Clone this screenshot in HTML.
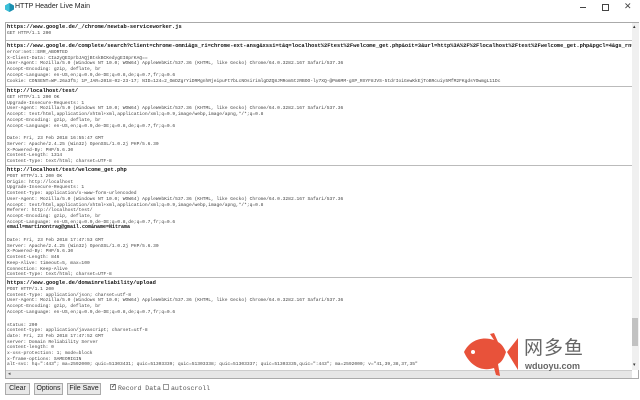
<!DOCTYPE html>
<html><head><meta charset="utf-8"><style>
*{margin:0;padding:0;box-sizing:border-box}
body{width:640px;height:400px;background:#fff;position:relative;overflow:hidden;font-family:"Liberation Sans",sans-serif}
.title{position:absolute;left:15px;top:3px;font-size:7px;color:#222}
.box{position:absolute;left:5px;top:22px;width:634px;height:357px;border:1px solid #aaa;background:#fff}
.clip{position:absolute;left:6px;top:23px;width:626px;height:347px;overflow:hidden}
.e{position:absolute;left:1px;font-family:"Liberation Mono",monospace;color:#444;white-space:nowrap;font-size:4.6px;line-height:5.7px}
.u{font-size:5.4px;line-height:7px;color:#111;font-weight:bold}
.b{font-weight:bold;color:#111;font-size:5px}
.g{height:7px}
.d{position:absolute;left:0;width:626px;height:1px;background:#bbb}
.btn{position:absolute;top:383px;height:12px;border:1px solid #aaa;background:#e8e8e8;font-size:7px;line-height:10px;text-align:center;color:#222}
.cb{position:absolute;top:385px;font-family:"Liberation Mono",monospace;font-size:6.5px;color:#555}
</style></head><body>
<svg style="position:absolute;left:5px;top:3px" width="9" height="9" viewBox="0 0 9 9"><path d="M4.5 0L9 2.5V6.5L4.5 9L0 6.5V2.5Z" fill="#1a8fb0"/><path d="M4.5 0V9L0 6.5V2.5Z" fill="#3cc0d8"/></svg>
<div class="title">HTTP Header Live Main</div>
<div style="position:absolute;left:580px;top:7px;width:6px;height:1px;background:#444"></div>
<div style="position:absolute;left:602px;top:4px;width:7px;height:7px;border:1px solid #444"></div>
<div style="position:absolute;left:624px;top:1px;font-size:9px;color:#444">✕</div>
<div class="box"></div>
<div class="clip">
<div class="d" style="top:17px"></div>
<div class="d" style="top:63px"></div>
<div class="d" style="top:142px"></div>
<div class="d" style="top:254px"></div>
<div class="e" style="top:1px"><div class="u">https://www.google.de/_/chrome/newtab-serviceworker.js</div><div>GET HTTP/1.1 200</div></div>
<div class="e" style="top:20px"><div class="u">https://www.google.de/complete/search?client=chrome-omni&amp;gs_ri=chrome-ext-ansg&amp;xssi=t&amp;q=localhost%2Ftest%2Fwelcome_get.php&amp;oit=3&amp;url=http%3A%2F%2Flocalhost%2Ftest%2Fwelcome_get.php&amp;pgcl=4&amp;gs_rn=</div>
<div>error:net::ERR_ABORTED</div><div>X-Client-Data: CIa2yQEIprbJAQjBtskBCKedygEI8prKAQ==</div><div>User-Agent: Mozilla/5.0 (Windows NT 10.0; WOW64) AppleWebKit/537.36 (KHTML, like Gecko) Chrome/64.0.3282.167 Safari/537.36</div><div>Accept-Encoding: gzip, deflate, br</div><div>Accept-Language: en-US,en;q=0.9,de-DE;q=0.8,de;q=0.7,fr;q=0.6</div><div>Cookie: CONSENT=WP.26a3f5; 1P_JAR=2018-02-23-17; NID=124=2_OmDZgrYiDRMgnhRjeipuFt7bLcNOsirimlgDZQ8JMRom5tzRBOO-ly7XQ-@Pm6MM-gXP_RXYF8JVS-5tdrIoiGewKkEjToBRcuiy5MfM2FKgdsYOwmgL11Dc</div></div>
<div class="e" style="top:65px"><div class="u">http://localhost/test/</div>
<div>GET HTTP/1.1 200 OK</div><div>Upgrade-Insecure-Requests: 1</div><div>User-Agent: Mozilla/5.0 (Windows NT 10.0; WOW64) AppleWebKit/537.36 (KHTML, like Gecko) Chrome/64.0.3282.167 Safari/537.36</div><div>Accept: text/html,application/xhtml+xml,application/xml;q=0.9,image/webp,image/apng,*/*;q=0.8</div><div>Accept-Encoding: gzip, deflate, br</div><div>Accept-Language: en-US,en;q=0.9,de-DE;q=0.8,de;q=0.7,fr;q=0.6</div><div class="g"></div>
<div>Date: Fri, 23 Feb 2018 16:55:47 GMT</div><div>Server: Apache/2.4.25 (Win32) OpenSSL/1.0.2j PHP/5.6.30</div><div>X-Powered-By: PHP/5.6.30</div><div>Content-Length: 1314</div><div>Content-Type: text/html; charset=UTF-8</div></div>
<div class="e" style="top:144px"><div class="u">http://localhost/test/welcome_get.php</div>
<div>POST HTTP/1.1 200 OK</div><div>Origin: http://localhost</div><div>Upgrade-Insecure-Requests: 1</div><div>Content-Type: application/x-www-form-urlencoded</div><div>User-Agent: Mozilla/5.0 (Windows NT 10.0; WOW64) AppleWebKit/537.36 (KHTML, like Gecko) Chrome/64.0.3282.167 Safari/537.36</div><div>Accept: text/html,application/xhtml+xml,application/xml;q=0.9,image/webp,image/apng,*/*;q=0.8</div><div>Referer: http://localhost/test/</div><div>Accept-Encoding: gzip, deflate, br</div><div>Accept-Language: en-US,en;q=0.9,de-DE;q=0.8,de;q=0.7,fr;q=0.6</div><div class="b">email=martinontrag@gmail.com&amp;name=Nitrama</div><div class="g"></div>
<div>Date: Fri, 23 Feb 2018 17:47:53 GMT</div><div>Server: Apache/2.4.25 (Win32) OpenSSL/1.0.2j PHP/5.6.30</div><div>X-Powered-By: PHP/5.6.30</div><div>Content-Length: 846</div><div>Keep-Alive: timeout=5, max=100</div><div>Connection: Keep-Alive</div><div>Content-Type: text/html; charset=UTF-8</div></div>
<div class="e" style="top:257px"><div class="u">https://www.google.de/domainreliability/upload</div>
<div>POST HTTP/1.1 200</div><div>Content-Type: application/json; charset=utf-8</div><div>User-Agent: Mozilla/5.0 (Windows NT 10.0; WOW64) AppleWebKit/537.36 (KHTML, like Gecko) Chrome/64.0.3282.167 Safari/537.36</div><div>Accept-Encoding: gzip, deflate, br</div><div>Accept-Language: en-US,en;q=0.9,de-DE;q=0.8,de;q=0.7,fr;q=0.6</div><div class="g"></div>
<div>status: 200</div><div>content-type: application/javascript; charset=utf-8</div><div>date: Fri, 23 Feb 2018 17:47:52 GMT</div><div>server: Domain Reliability Server</div><div>content-length: 0</div><div>x-xss-protection: 1; mode=block</div><div>x-frame-options: SAMEORIGIN</div><div>alt-svc: hq=":443"; ma=2592000; quic=51303431; quic=51303339; quic=51303338; quic=51303337; quic=51303335,quic=":443"; ma=2592000; v="41,39,38,37,35"</div></div>
</div>
<div style="position:absolute;left:6px;top:370px;width:626px;height:8px;background:#e6e6e6;border-top:1px solid #ccc"></div>
<div style="position:absolute;left:8px;top:371px;font-size:5px;color:#555">◂</div>
<div style="position:absolute;left:632px;top:23px;width:7px;height:347px;background:#f0f0f0"></div>
<div style="position:absolute;left:632px;top:318px;width:6px;height:28px;background:#c2c2c2"></div>
<div style="position:absolute;left:633px;top:24px;font-size:5px;color:#333">▴</div>
<div style="position:absolute;left:633px;top:362px;font-size:5px;color:#333">▾</div>
<svg style="position:absolute;left:462px;top:330px" width="60" height="50" viewBox="0 0 60 50"><path d="M2 22C8 10 20 6 32 10L28 4L32 3L36 12C40 14 42 18 44 22C42 28 40 32 36 34L38 46L34 45L32 38C20 42 8 36 2 22Z" fill="#e8523a"/><circle cx="11" cy="22" r="2" fill="#fff"/><path d="M45 22L56 8L56 40Z" fill="#e8523a"/></svg>
<div style="position:absolute;left:524px;top:336px;font-family:'Noto Sans CJK SC',sans-serif;font-size:19px;color:#666;letter-spacing:1px;line-height:22px">网多鱼</div>
<div style="position:absolute;left:525px;top:361px;font-size:9px;color:#666;font-weight:bold">wduoyu.com</div>
<div class="btn" style="left:5px;width:25px">Clear</div>
<div class="btn" style="left:34px;width:29px">Options</div>
<div class="btn" style="left:67px;width:34px">File Save</div>
<div style="position:absolute;left:110px;top:384px;width:6px;height:6px;border:1px solid #888;font-size:6px;line-height:5px;color:#222">✓</div>
<div class="cb" style="left:118px">Record Data</div>
<div style="position:absolute;left:163px;top:384px;width:6px;height:6px;border:1px solid #999"></div>
<div class="cb" style="left:171px">autoscroll</div>
</body></html>
